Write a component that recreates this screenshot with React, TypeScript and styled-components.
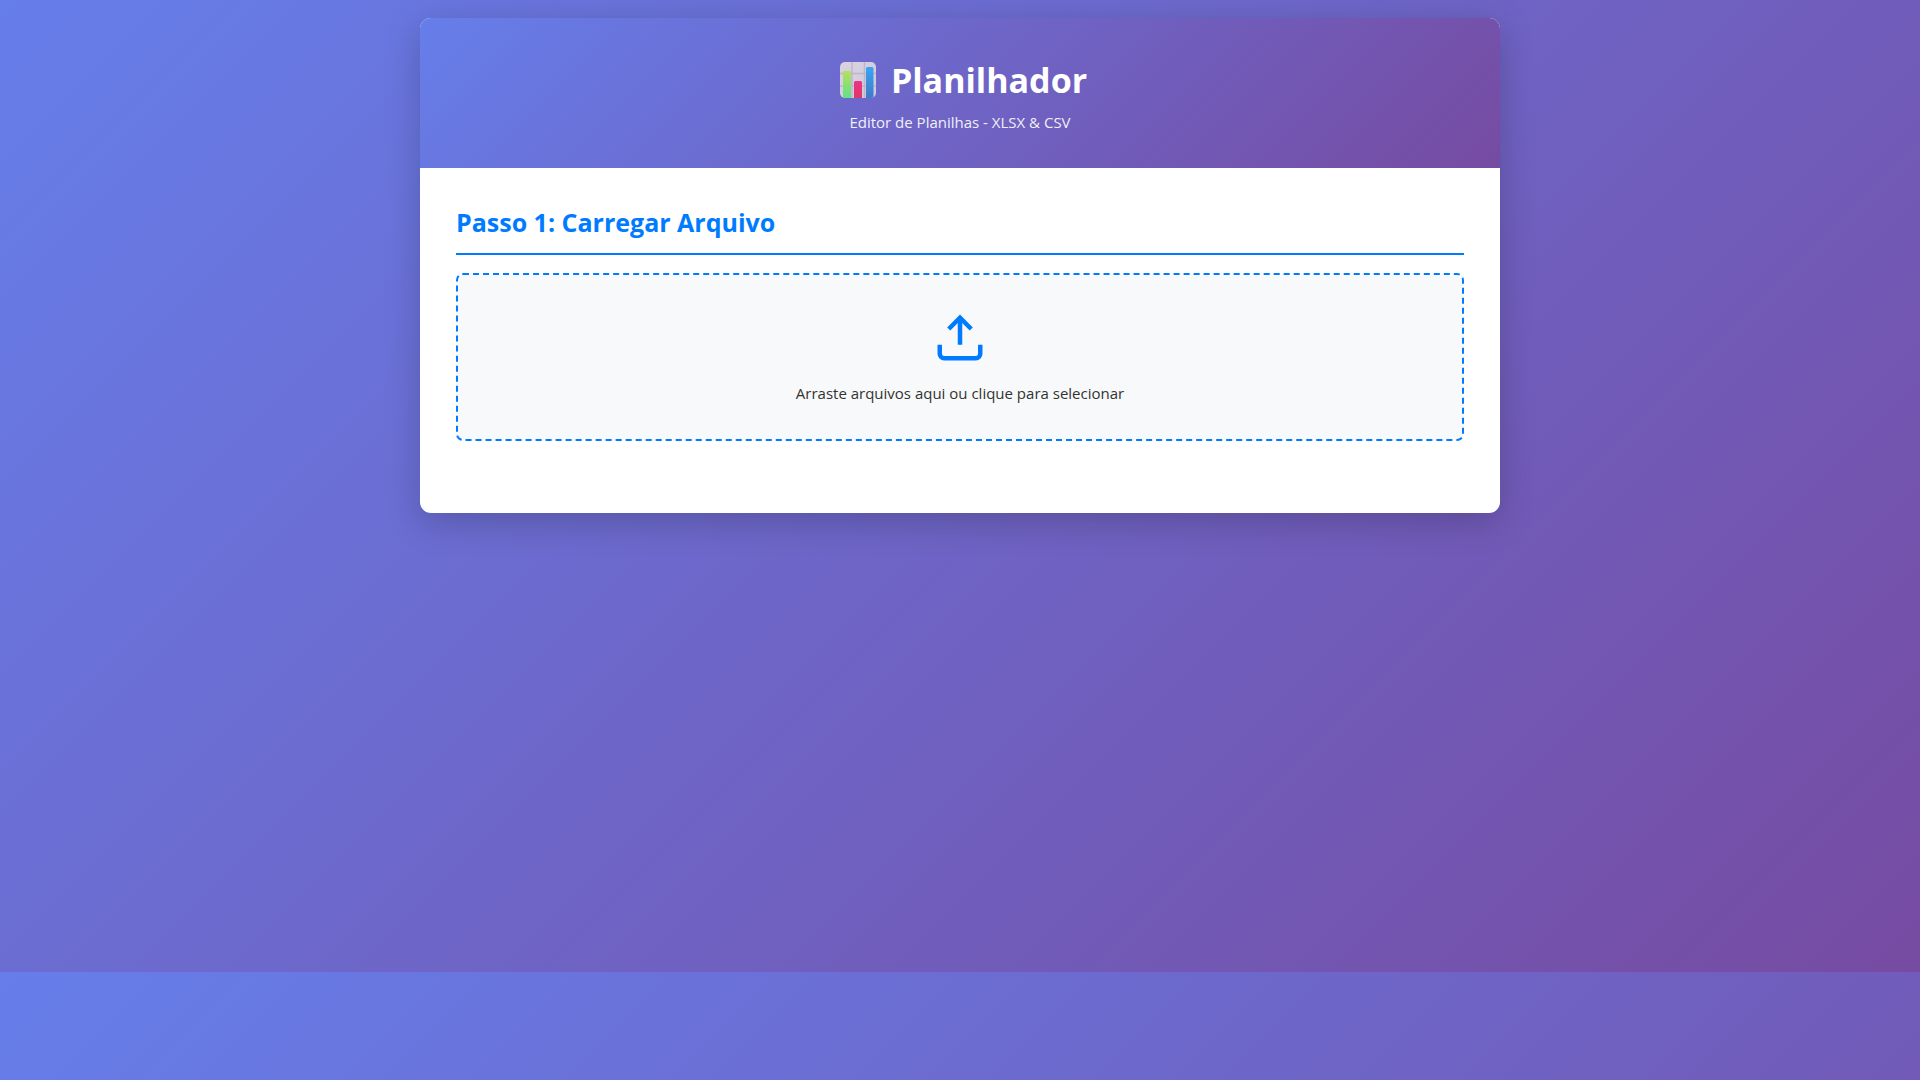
import React, { useState } from "react";
import styled, { createGlobalStyle } from "styled-components";

const fontStack = `"Segoe UI", "Open Sans", "Noto Sans", sans-serif`;
const brandGradient = "linear-gradient(135deg, #667eea 0%, #764ba2 100%)";
const primary = "#007bff";

const GlobalStyle = createGlobalStyle`
  *, *::before, *::after {
    box-sizing: border-box;
  }

  html {
    background: ${brandGradient};
    background-size: 100% 90vh;
  }

  body {
    margin: 0;
    min-height: 90vh;
    padding: 18px;
    font-family: ${fontStack};
    color: #333;
  }

  h1, h2, p {
    margin: 0;
  }
`;

const Container = styled.div`
  max-width: 1080px;
  margin: 0 auto;
  background: #fff;
  border-radius: 11px;
  box-shadow: 0 9px 36px rgba(0, 0, 0, 0.2);
  overflow: hidden;
`;

const Header = styled.header`
  padding: 36px;
  background: ${brandGradient};
  color: #fff;
  text-align: center;
`;

const Title = styled.h1`
  display: flex;
  align-items: center;
  justify-content: center;
  gap: 10px;
  margin-bottom: 6px;
  font-size: 34px;
  line-height: 52px;
  font-weight: 700;
`;

const Subtitle = styled.p`
  font-size: 15px;
  line-height: 20px;
  opacity: 0.9;
`;

const Main = styled.main`
  padding: 36px;
`;

const Section = styled.section`
  margin-bottom: 36px;
`;

const SectionTitle = styled.h2`
  margin-bottom: 18px;
  padding-bottom: 13px;
  border-bottom: 2px solid ${primary};
  color: ${primary};
  font-size: 25px;
  line-height: 36px;
  font-weight: 700;
`;

const DropZone = styled.label<{ $active: boolean }>`
  position: relative;
  display: flex;
  flex-direction: column;
  align-items: center;
  gap: 18px;
  padding: 36px;
  border: 2px dashed ${primary};
  border-radius: 7px;
  background: ${({ $active }) => ($active ? "#e7f1ff" : "#f8f9fa")};
  cursor: pointer;
`;

const FileInput = styled.input`
  position: absolute;
  inset: 0;
  width: 100%;
  height: 100%;
  opacity: 0;
  cursor: pointer;
`;

const DropText = styled.span`
  font-size: 15px;
  line-height: 20px;
`;

const UploadIcon = () => (
  <svg width="54" height="54" viewBox="0 0 24 24" fill="none" stroke={primary} strokeWidth="2" aria-hidden="true">
    <path d="M21 15v4a2 2 0 0 1-2 2H5a2 2 0 0 1-2-2v-4" />
    <polyline points="17 8 12 3 7 8" />
    <line x1="12" y1="3" x2="12" y2="15" />
  </svg>
);

const ChartIcon = () => (
  <svg width="48" height="36" viewBox="0 0 48 36" aria-hidden="true">
    <defs>
      <linearGradient id="paper" x1="0" y1="0" x2="1" y2="1">
        <stop offset="0" stopColor="#d9d3e0" />
        <stop offset="1" stopColor="#cfc8dc" />
      </linearGradient>
      <linearGradient id="green" x1="0" y1="0" x2="0" y2="1">
        <stop offset="0" stopColor="#b5e05a" />
        <stop offset="1" stopColor="#62e08c" />
      </linearGradient>
      <linearGradient id="red" x1="0" y1="0" x2="0" y2="1">
        <stop offset="0" stopColor="#ee3289" />
        <stop offset="1" stopColor="#dc3a66" />
      </linearGradient>
      <linearGradient id="blue" x1="0" y1="0" x2="0" y2="1">
        <stop offset="0" stopColor="#37a6f5" />
        <stop offset="1" stopColor="#3f7bc8" />
      </linearGradient>
      <clipPath id="sheet">
        <rect x="7" y="0" width="36" height="36" rx="5" />
      </clipPath>
    </defs>
    <g clipPath="url(#sheet)">
      <rect x="7" y="0" width="36" height="36" fill="url(#paper)" />
      <path d="M7 11.5h36M7 24h36M19 0v36M31.5 0v36" stroke="#bdb6cb" strokeWidth="1.4" fill="none" />
      <path d="M10 10.500q0-1.500 1.500-1.500h5q1.500 0 1.500 1.500v25.500h-8z" fill="url(#green)" />
      <path d="M21 20.500q0-1.500 1.500-1.500h5q1.500 0 1.500 1.500v15.500h-8z" fill="url(#red)" />
      <path d="M33 6.500q0-1.500 1.500-1.500h4.500q1.500 0 1.500 1.500v29.500h-7.500z" fill="url(#blue)" />
    </g>
  </svg>
);

export default function App() {
  const [active, setActive] = useState(false);

  return (
    <>
      <GlobalStyle />
      <Container>
        <Header>
          <Title>
            <ChartIcon />
            Planilhador
          </Title>
          <Subtitle>Editor de Planilhas - XLSX &amp; CSV</Subtitle>
        </Header>
        <Main>
          <Section>
            <SectionTitle>Passo 1: Carregar Arquivo</SectionTitle>
            <DropZone
              $active={active}
              htmlFor="arquivo"
              onDragEnter={() => setActive(true)}
              onDragLeave={() => setActive(false)}
              onDrop={() => setActive(false)}
            >
              <UploadIcon />
              <DropText>Arraste arquivos aqui ou clique para selecionar</DropText>
              <FileInput id="arquivo" type="file" accept=".xlsx,.csv" multiple />
            </DropZone>
          </Section>
        </Main>
      </Container>
    </>
  );
}
